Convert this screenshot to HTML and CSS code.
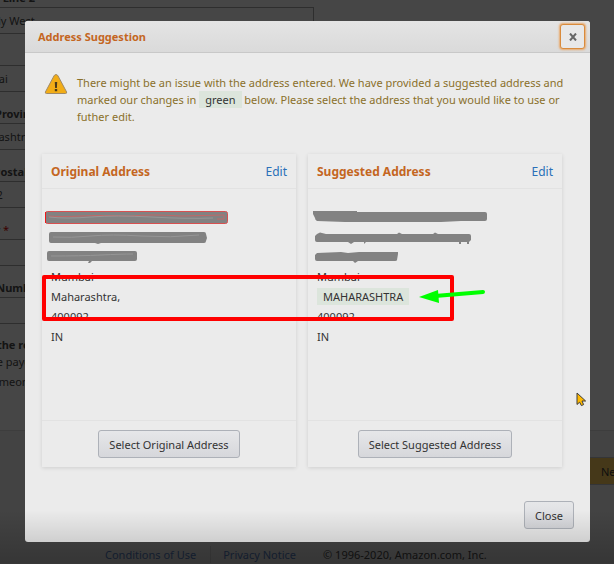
FILE: index.html
```
<!DOCTYPE html>
<html lang="en">
<head>
    <meta charset="UTF-8">
    <meta name="viewport" content="width=device-width, initial-scale=1.0">
    <title>Address Suggestion</title>
    <link rel="stylesheet" href="styles.css">
</head>
<body>
    <div class="page">
        <form class="account-form">
            <label for="line2">Address Line 2</label>
            <input type="text" id="line2" value="Borivaly West">
            <label for="city">City</label>
            <input type="text" id="city" value="Mumbai">
            <label for="state">State / Province</label>
            <input type="text" id="state" value="Maharashtra">
            <label for="zip">PIN or Postal Code</label>
            <input type="text" id="zip" value="400092">
            <label for="country">Country <span class="required">*</span></label>
            <input type="text" id="country">
            <label for="phone">Mobile Number</label>
            <input type="text" id="phone">
            <p class="question">Are you the registered</p>
            <p>Name the payee</p>
            <p>Pay to someone else</p>
        </form>
        <div class="actions">
            <button type="button" class="next">Next</button>
        </div>
        <footer class="footer">
            <a href="#">Conditions of Use</a>
            <a href="#">Privacy Notice</a>
            <span>© 1996-2020, Amazon.com, Inc.</span>
        </footer>
    </div>

    <div class="overlay">
        <div class="modal" role="dialog" aria-labelledby="modal-title">
            <header class="modal-header">
                <h1 id="modal-title">Address Suggestion</h1>
                <button type="button" class="close-x" aria-label="Close dialog">
                    <svg width="8" height="8" viewBox="0 0 8 8"><path d="M1 0.5L7 7.5M7 0.5L1 7.5" stroke="#666" stroke-width="2"/></svg>
                </button>
            </header>

            <div class="modal-body">
                <div class="warning">
                    <svg width="24" height="22" viewBox="0 0 24 22">
                        <path d="M10.2 1.5Q12 -0.6 13.8 1.5L22.6 18Q23 19.5 21.5 19.5H2.5Q1 19.5 1.4 18Z" fill="#f2ad17" stroke="#a08a68"/>
                        <path d="M10.8 8h2.4l-.3 6h-1.8zM10.8 15h2.4v2.2h-2.4z" fill="#4a3a1a"/>
                    </svg>
                    <p>There might be an issue with the address entered. We have provided a suggested address and marked our changes in <span class="changed">green</span> below. Please select the address that you would like to use or futher edit.</p>
                </div>

                <div class="cards">
                    <section class="card">
                        <div class="card-header">
                            <h2>Original Address</h2>
                            <a href="#">Edit</a>
                        </div>
                        <div class="card-body">
                            <div>Mumbai</div>
                            <div>Maharashtra,</div>
                            <div>400092</div>
                            <div>IN</div>
                        </div>
                        <div class="card-footer">
                            <button type="button">Select Original Address</button>
                        </div>
                    </section>
                    <section class="card">
                        <div class="card-header">
                            <h2>Suggested Address</h2>
                            <a href="#">Edit</a>
                        </div>
                        <div class="card-body">
                            <div>Mumbai</div>
                            <div><span class="changed">MAHARASHTRA</span></div>
                            <div>400092</div>
                            <div>IN</div>
                        </div>
                        <div class="card-footer">
                            <button type="button">Select Suggested Address</button>
                        </div>
                    </section>

                    <!-- redactions, highlight box and arrow drawn over both cards -->
                    <svg class="marks" width="522" height="316" viewBox="0 0 522 316">
                        <g fill="#828282">
                            <rect x="4.5" y="61.5" width="182" height="12" rx="2" stroke="#d85050"/>
                            <path d="M10 82H163Q165 82 165 84L166 88L165 91Q165 93 163 93H60L57 94L54 93H10Q8 93 8 91V84Q8 82 10 82Z"/>
                            <path d="M8 101H94Q96 101 96 103V109Q96 111 94 111H51L49 113H47L48 111H8Q6 111 6 109V103Q6 101 8 101Z"/>
                            <path d="M272 61H316V62H444Q446 62 446 64V69Q446 71 444 71H420L400 72H330L304 72L276 71Q274 70 274 68L272 64Z"/>
                            <path d="M276 84L279 82.5L285 84H356L358 82.5L361 84H392L394 82.5L397 84H428Q430 84 430 86V90L428 92V94H426V92H420V94H418V92H325L323 94V92H313L310 94L307 92H276Q274 92 274 90V86Z"/>
                            <path d="M276 103L300 102L307 103L318 102H357V104L356 110Q356 111 354 111H317L314 113L312 111H276Q274 111 274 109V105Z"/>
                        </g>
                        <path d="M4.5 62V73" stroke="#f01818"/>
                        <path d="M7 66Q20 67 40 66T90 66Q110 64 140 66L183 65V69H176" fill="none" stroke="#c06868"/>
                        <g fill="none" stroke="#969696">
                            <path d="M8 67Q25 69 50 67T110 67T172 68"/>
                            <path d="M12 87Q30 88 50 86T100 86T158 85"/>
                            <path d="M10 106Q40 106 60 105T92 104"/>
                        </g>
                        <rect x="3" y="127" width="408" height="42" fill="none" stroke="#f00" stroke-width="4" stroke-linejoin="round"/>
                        <path d="M442 142L394 146" stroke="#0f0" stroke-width="4" stroke-linecap="round"/>
                        <path d="M378 147L397 140L398 153Z" fill="#0f0"/>
                    </svg>
                </div>
            </div>

            <footer class="modal-footer">
                <button type="button">Close</button>
            </footer>

            <svg class="pointer" width="11" height="15" viewBox="0 0 11 15">
                <path d="M1 1V12.5L3.6 10.2L5.4 13.6L7.6 12.6L6 9H9.6Z" fill="#ffb900" stroke="#3c3c3c"/>
            </svg>
        </div>
    </div>
</body>
</html>
```
FILE: styles.css
```
* {
    box-sizing: border-box;
    margin: 0;
    padding: 0;
}

body {
    min-height: 100vh;
    overflow: hidden;
    background: #ebebeb;
    color: #444;
    font-family: "Noto Sans", "Open Sans", sans-serif;
    font-size: 11px;
    line-height: 17px;
}

/* account page behind the dialog */
.page {
    height: 100vh;
    overflow: hidden;
}

.account-form {
    height: 440px;
    margin-left: -48px;
    margin-top: -10px;
}

.account-form label {
    display: block;
    height: 17px;
    padding-left: 4px;
    font-weight: bold;
    line-height: 15px;
}

.account-form input {
    display: block;
    width: 362px;
    height: 27px;
    margin-bottom: 14px;
    padding-left: 12px;
    border: 1px solid #999;
    background: transparent;
    color: inherit;
    font: inherit;
}

.account-form p {
    line-height: 20px;
}

.account-form .question {
    font-weight: bold;
    line-height: 14px;
}

.required {
    color: #c40000;
    font-weight: normal;
}

.actions {
    display: flex;
    height: 116px;
    padding-top: 26px;
    padding-left: 582px;
    border-top: 1px solid #ccc;
    background: #e0e0e0;
}

.next {
    height: 28px;
    padding: 0 18px;
    flex-shrink: 0;
    background: #e8bd55;
}

.footer {
    display: flex;
    padding-left: 105px;
    background: #e0e0e0;
    white-space: nowrap;
}

.footer a {
    margin-right: 12px;
    padding-right: 14px;
    border-right: 1px solid #c8c8c8;
    color: #5078b8;
    text-decoration: none;
}

.footer a + a {
    border-color: transparent;
}

.overlay {
    position: absolute;
    inset: 0;
    padding: 21px 24px 0 25px;
    background: rgba(0, 0, 0, 0.7);
}

/* shade along the bottom of the window */
.overlay::after {
    content: "";
    position: absolute;
    inset: auto 0 0 0;
    height: 54px;
    background: linear-gradient(transparent, rgba(0, 0, 0, 0.2));
    pointer-events: none;
}

.modal {
    position: relative;
    border-radius: 3px;
    background: #ebebeb;
    color: #333;
}

.modal-header {
    display: flex;
    justify-content: space-between;
    align-items: center;
    height: 32px;
    padding: 0 5px 0 13px;
    border-bottom: 1px solid #c8c8c8;
    border-radius: 3px 3px 0 0;
    background: linear-gradient(#e4e4e4, #dadada);
}

h1 {
    color: #c4661f;
    font-size: 11px;
}

button {
    border: 1px solid #adb1b8;
    border-radius: 3px;
    background: linear-gradient(#e6e7e9, #d6d7db);
    color: #333;
    font: inherit;
}

.close-x {
    width: 25px;
    height: 25px;
    border-color: #d98b3c;
    background: #e8e8e8;
    box-shadow: 0 0 2px 1px #e8a86a;
}

.modal-body {
    padding: 21px 28px 0 17px;
}

.warning {
    display: flex;
    gap: 9px;
    margin-right: -8px;
    padding-left: 2px;
    color: #8a702a;
}

.warning svg {
    flex-shrink: 0;
}

.changed {
    display: inline-block;
    padding: 0 6px;
    background: #dce5dc;
    color: #333;
    line-height: 17px;
}

.cards {
    position: relative;
    display: grid;
    grid-template-columns: 1fr 1fr;
    gap: 12px;
    margin-top: 29px;
}

.card {
    box-shadow: 0 1px 4px rgba(0, 0, 0, 0.12);
}

.card-header {
    display: flex;
    justify-content: space-between;
    align-items: center;
    height: 35px;
    padding: 0 9px;
    border-bottom: 1px solid #e2e2e2;
    font-size: 12px;
}

h2 {
    color: #c4661f;
    font-size: 12px;
}

.card-header a {
    color: #2a70b8;
    text-decoration: none;
}

.card-body {
    height: 231px;
    padding: 78px 9px 0;
    line-height: 20px;
}

.card-footer {
    padding: 9px 0;
    border-top: 1px solid #e2e2e2;
    text-align: center;
}

.modal button:not(.close-x) {
    height: 28px;
    padding: 0 10px;
}

.marks {
    position: absolute;
    top: -4px;
    left: -1px;
}

.modal-footer {
    padding: 34px 16px 13px;
    border-radius: 0 0 3px 3px;
    text-align: right;
}

.pointer {
    position: absolute;
    top: 371px;
    right: 3px;
}
```
